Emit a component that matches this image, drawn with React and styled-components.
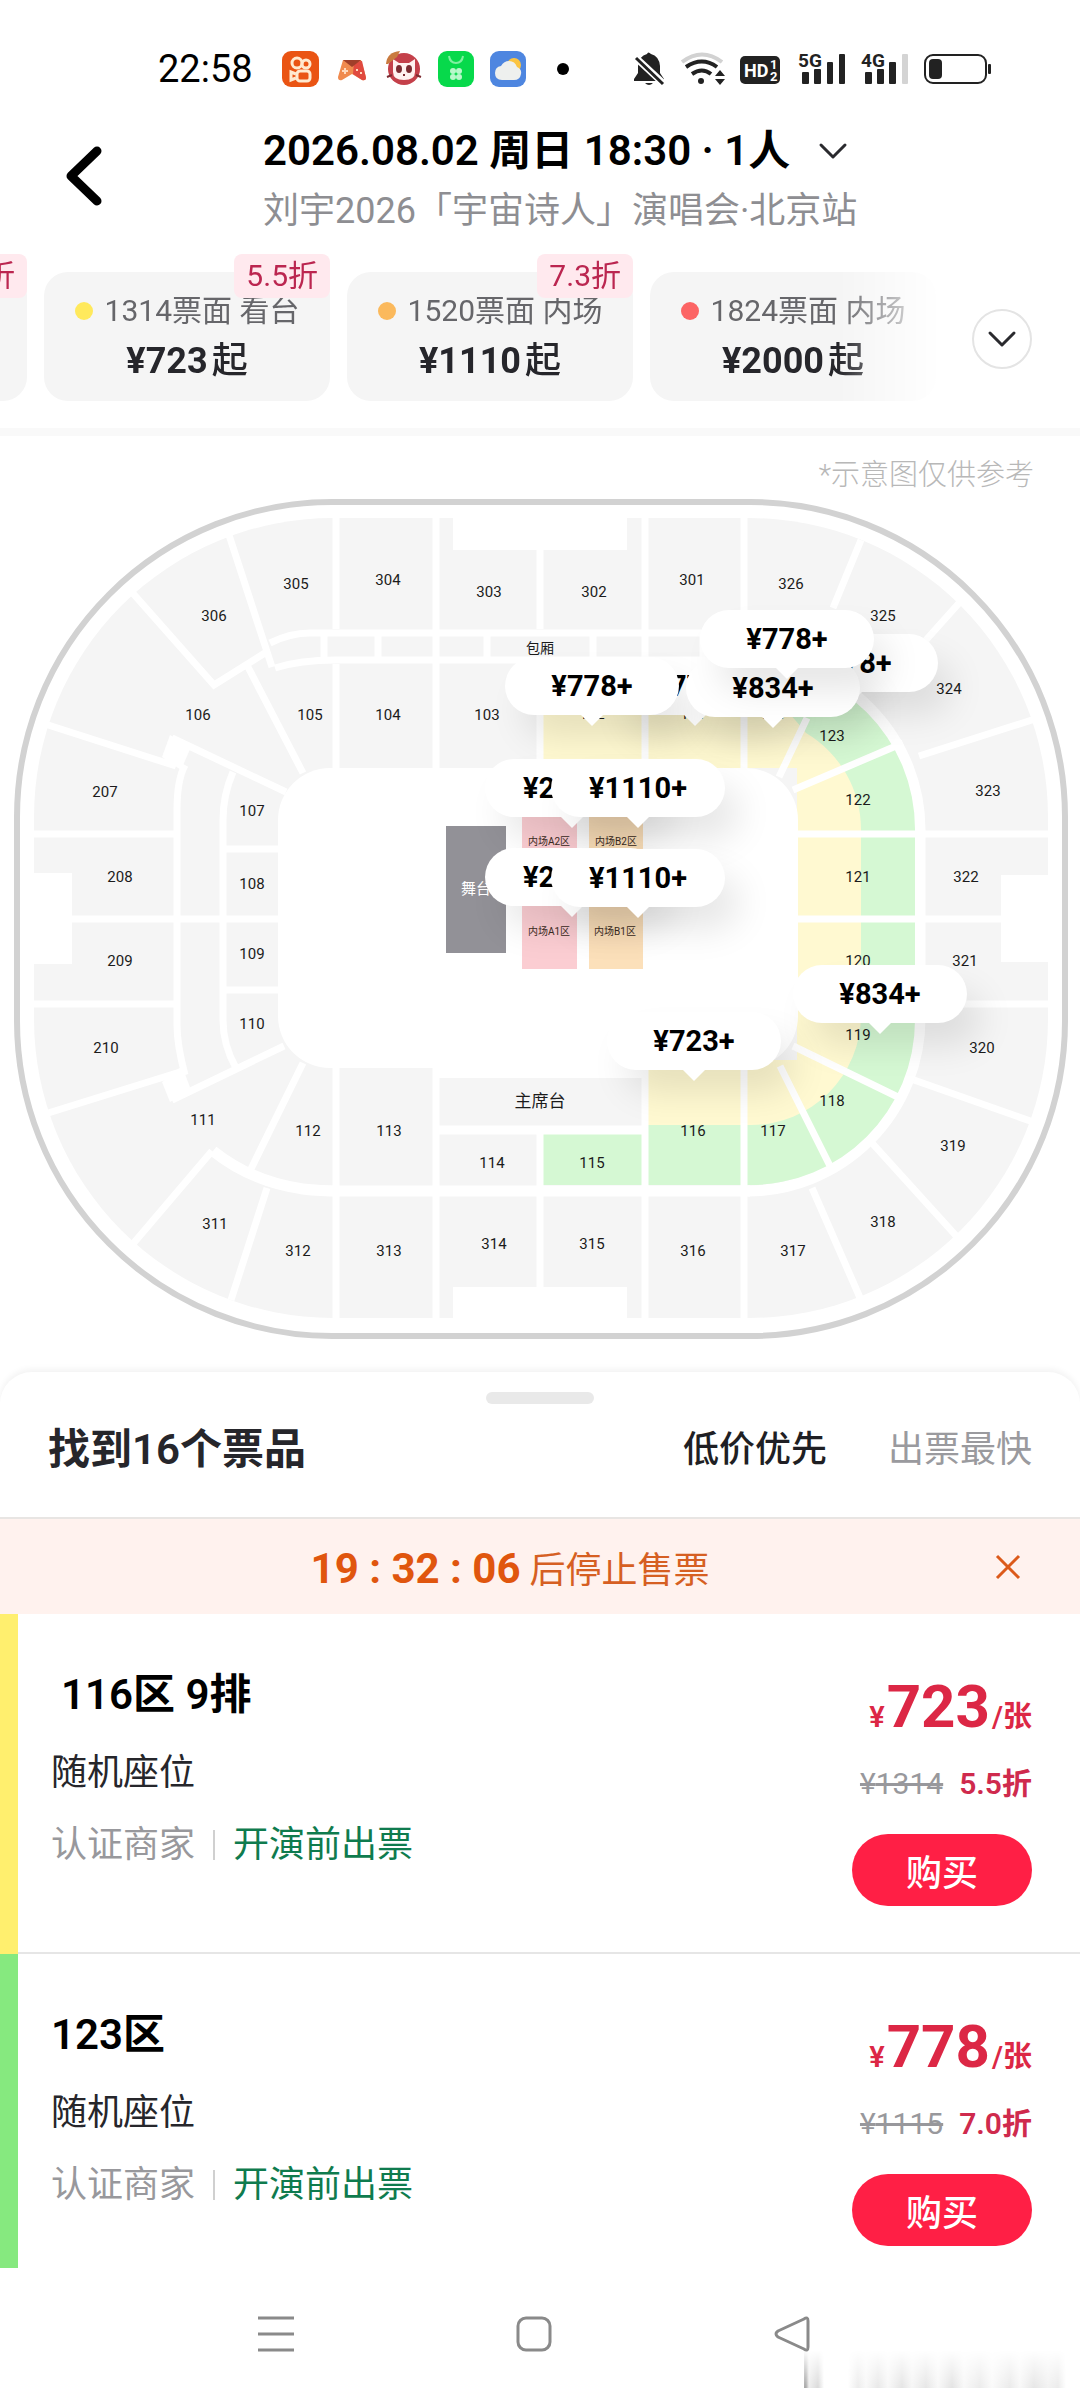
import React from "react";
import styled, { createGlobalStyle } from "styled-components";

const GlobalStyle = createGlobalStyle`
  * {
    box-sizing: border-box;
  }
  body {
    margin: 0;
    background: #fff;
    font-family: Roboto, "Noto Sans CJK SC", sans-serif;
  }
  button {
    border: 0;
    padding: 0;
    background: none;
    font: inherit;
    color: inherit;
    cursor: pointer;
  }
  svg {
    display: block;
    overflow: visible;
  }
  h1, h2, h3, p {
    margin: 0;
  }
`;

const tickets = [
  { label: "1115票面 看台", price: 778, off: "7.0折", color: "#84e77d" },
  { label: "1314票面 看台", price: 723, off: "5.5折", color: "#ffe95c" },
  { label: "1520票面 内场", price: 1110, off: "7.3折", color: "#fbb95c" },
  { label: "1824票面 内场", price: 2000, color: "#fc6464" },
];

const listings = [
  { id: 1, title: "116区 9排", inset: true, price: 723, face: 1314, off: "5.5折", color: "#ffef6e" },
  { id: 2, title: "123区", price: 778, face: 1115, off: "7.0折", color: "#86e97f" },
];

const labels = [
  [305, 296, 584], [304, 388, 580], [303, 489, 592], [302, 594, 592], [301, 692, 580],
  [326, 791, 584], [325, 883, 616], [324, 949, 689], [323, 988, 791], [322, 966, 877],
  [321, 965, 961], [320, 982, 1048], [319, 953, 1146], [318, 883, 1222], [317, 793, 1251],
  [316, 693, 1251], [315, 592, 1244], [314, 494, 1244], [313, 389, 1251], [312, 298, 1251],
  [311, 215, 1224], [306, 214, 616], [106, 198, 715], [105, 310, 715], [104, 388, 715],
  [103, 487, 715], [102, 592, 714], [101, 693, 714], [124, 772, 714], [207, 105, 792],
  [107, 252, 811], [208, 120, 877], [108, 252, 884], [209, 120, 961], [109, 252, 954],
  [210, 106, 1048], [110, 252, 1024], [111, 203, 1120], [112, 308, 1131], [113, 389, 1131],
  [114, 492, 1163], [115, 592, 1163], [116, 693, 1131], [117, 773, 1131], [118, 832, 1101],
  [119, 858, 1035], [120, 858, 961], [121, 858, 877], [122, 858, 800], [123, 832, 736],
];

// x is the tip of the pin, y the top of the bubble, both in map units
const pins = [
  { x: 695, y: 657, price: 778 },
  { x: 592, y: 657, price: 778 },
  { x: 851, y: 634, price: 778 },
  { x: 773, y: 659, price: 834 },
  { x: 787, y: 610, price: 778 },
  { x: 572, y: 759, price: 2000 },
  { x: 638, y: 759, price: 1110 },
  { x: 572, y: 848, price: 2000 },
  { x: 638, y: 849, price: 1110 },
  { x: 694, y: 1012, price: 723 },
  { x: 880, y: 965, price: 834 },
];

const MAP = { top: 496, width: 1080, height: 848 };

const Chevron = () => (
  <svg width="26" height="13" viewBox="0 0 26 13" fill="none" stroke="#2a2a2e" strokeWidth="3" strokeLinecap="round" strokeLinejoin="round">
    <path d="M1 0 L13 12 L25 0" />
  </svg>
);

const AppIcons = () => (
  <svg width="246" height="36" viewBox="282 51 246 36">
    <rect x="282" y="51" width="37" height="36" rx="9" fill="#ea5413" />
    <g fill="none" stroke="#ffe9cf" strokeWidth="3">
      <circle cx="297" cy="63" r="5" />
      <circle cx="306" cy="64" r="4" />
      <rect x="297" y="71" width="13" height="10" rx="3" />
      <path d="M296 74 l-5 -2 v8 l5 -2" />
    </g>
    <path d="M343 60 h18 l5 17 q0 4 -4 3 l-10 -6 -10 6 q-4 1 -4 -3z" fill="#f08a4e" />
    <path d="M354 62 l8 -1 4 17 q0 3 -4 2 l-9 -6z" fill="#e04a3f" />
    <path d="M343 60 h18 l-9 7z" fill="#a03f2a" />
    <path d="M342 71 h6 M345 68 v6 M356 70 h2 M360 73 h2" stroke="#ffd9bd" strokeWidth="2" />
    <circle cx="404" cy="69" r="16" fill="#c4404a" />
    <path d="M393 59 l6 4 h10 l6 -4 v13 q0 8 -11 8 q-11 0 -11 -8z" fill="#fff1ef" />
    <ellipse cx="399" cy="69" rx="3" ry="4" fill="#7c2b31" />
    <ellipse cx="409" cy="69" rx="3" ry="4" fill="#7c2b31" />
    <path d="M403 75 h2 M392 75 l-5 2 M416 75 l5 2" stroke="#7c2b31" strokeWidth="2" />
    <path d="M386 64 q1 -12 14 -13 q-2 4 -3 6 l-9 7z" fill="#c97a3f" />
    <rect x="438" y="51" width="36" height="36" rx="9" fill="#07d94b" />
    <path d="M449 56 q1 7 7 7 q6 0 7 -7" fill="none" stroke="#7ff0a0" strokeWidth="2" />
    <g fill="#b9f8cb">
      <circle cx="453" cy="71" r="3" />
      <circle cx="459" cy="71" r="3" />
      <circle cx="453" cy="77" r="3" />
      <circle cx="459" cy="77" r="3" />
    </g>
    <rect x="490" y="51" width="36" height="36" rx="9" fill="#4e86e0" />
    <circle cx="514" cy="65" r="7" fill="#fbc441" />
    <path d="M502 80 q-7 0 -7 -7 q0 -6 6 -7 q3 -5 8 -5 q6 0 8 6 q5 2 4 7 q-1 6 -7 6z" fill="#eef0ee" />
  </svg>
);

const SystemIcons = () => (
  <svg width="362" height="36" viewBox="630 51 362 36">
    <g fill="#222">
      <path d="M647 54 q1 -3 4 0 q8 2 9 12 v7 l4 6 v2 h-30 v-2 l4 -6 v-7 q1 -10 9 -12z" />
      <path d="M645 83 h8 q-4 4 -8 0z" />
    </g>
    <path d="M635 57 l29 27" stroke="#fff" strokeWidth="7" />
    <path d="M636 58 l27 26" stroke="#222" strokeWidth="3" />
    <g fill="none" strokeWidth="4">
      <path d="M682 62 q20 -15 40 0" stroke="#d2d2d2" />
      <path d="M686 67 q16 -11 31 0" stroke="#222" />
      <path d="M692 74 q10 -7 19 0" stroke="#222" />
    </g>
    <circle cx="701" cy="81" r="3" fill="#222" />
    <path d="M715 76 l5 -6 5 6z M715 79 l5 6 5 -6z" fill="#222" />
    <rect x="740" y="56" width="40" height="28" rx="5" fill="#222" />
    <g fill="#fff" fontWeight="700">
      <text x="744" y="77" fontSize="18">HD</text>
      <text x="770" y="69" fontSize="13">1</text>
      <text x="770" y="81" fontSize="13">2</text>
    </g>
    <g fill="#222">
      <text x="798" y="67" fontSize="19" fontWeight="700">5G</text>
      <rect x="802" y="72" width="7" height="12" rx="1" />
      <rect x="814" y="69" width="7" height="15" rx="1" />
      <rect x="827" y="62" width="6" height="22" rx="1" />
      <rect x="839" y="54" width="6" height="30" rx="1" />
      <text x="861" y="67" fontSize="19" fontWeight="700">4G</text>
      <rect x="865" y="72" width="7" height="12" rx="1" />
      <rect x="877" y="69" width="7" height="15" rx="1" />
      <rect x="889" y="62" width="7" height="22" rx="1" />
    </g>
    <rect x="902" y="54" width="6" height="30" rx="1" fill="#d4d4d4" />
    <rect x="925" y="55" width="61" height="28" rx="8" fill="none" stroke="#222" strokeWidth="2" />
    <rect x="929" y="59" width="13" height="20" rx="4" fill="#222" />
    <rect x="988" y="64" width="3" height="10" rx="1" fill="#222" />
  </svg>
);

const SeatMap = () => (
  <MapSvg viewBox={`0 ${MAP.top} ${MAP.width} ${MAP.height}`}>
    <rect x="17" y="502" width="1048" height="834" rx="315" fill="#fff" stroke="#d2d2d2" strokeWidth="6" />
    <rect x="34" y="518" width="1014" height="800" rx="299" fill="#f5f5f5" />

    {/* ring between outer and inner stands */}
    <path d="M748 657 A173 173 0 0 1 920 830 V1018 A173 173 0 0 1 748 1191" fill="none" stroke="#fff" strokeWidth="11" />
    <path d="M213 1151 Q252 1182 303 1189 Q320 1191 340 1191 H750" fill="none" stroke="#fff" strokeWidth="11" />

    {/* green and yellow stands */}
    <path d="M648 664 H750 A165 165 0 0 1 915 829 V1020 A165 165 0 0 1 750 1185 H648 V1060 H797 V768 H648z" fill="#d5f8d3" />
    <path d="M543 664 H648 V768 H543z" fill="#fff9d1" />
    <path d="M648 664 H740 Q790 712 806 733 A112 112 0 0 1 861 830 V1015 A110 110 0 0 1 751 1125 H648 V1060 H797 V768 H648z" fill="#fff9d1" />
    <rect x="543" y="1134" width="99" height="51" fill="#d5f8d3" />

    {/* field */}
    <rect x="278" y="768" width="520" height="300" rx="52" fill="#fff" />
    <rect x="439" y="1060" width="203" height="18" fill="#fff" />

    {/* notches */}
    <g fill="#fff">
      <rect x="453" y="510" width="174" height="40" />
      <rect x="453" y="1287" width="174" height="40" />
      <rect x="28" y="873" width="44" height="91" />
      <rect x="1001" y="875" width="54" height="87" />
      <path d="M170 735 L191 747 L181 770 L162 757z" />
      <path d="M162 1082 L170 1102 L191 1090 L182 1066z" />
    </g>

    {/* aisles */}
    <g fill="none" stroke="#fff" strokeWidth="7">
      <path d="M336 510 V629 M336 664 V768 M436 510 V768 M645 510 V768 M744 510 V768 M540 550 V629 M540 664 V768" />
      <path d="M336 1066 V1325 M436 1066 V1325 M645 1066 V1325 M744 1066 V1325 M540 1130 V1287" />
      <path d="M270 643 Q290 633 310 633 H748 M275 668 Q300 660 336 660 H748" />
      <path d="M324 633 V660 M378 633 V660 M487 633 V660 M593 633 V660 M703 633 V660" />
      <path d="M439 1130 H642" strokeWidth="9" />
      <path d="M28 834 H176 M28 919 H280 M28 1004 H176 M223 849 H280 M223 990 H280" />
      <path d="M185 765 Q177 780 177 810 V1025 Q177 1045 185 1075" />
      <path d="M233 772 Q223 795 223 820 V1020 Q223 1045 236 1068" />
      <path d="M797 834 H1055 M797 919 H1055 M921 1004 H1055" />
      <path d="M229 535 L272 667 M130 590 L214 685 L268 651 M248 667 L303 773 M45 724 L176 766 M172 738 L286 792" />
      <path d="M303 1063 L249 1173 M267 1188 L231 1300 M212 1151 L132 1245 M45 1114 L180 1072 M172 1100 L284 1046" />
      <path d="M793 790 L903 743 M779 777 L807 718 M919 756 L1035 719 M926 640 L960 602 M833 608 L861 540" />
      <path d="M793 1046 L902 1099 M780 1066 L832 1170 M812 1188 L861 1300 M872 1143 L959 1239 M914 1080 L1036 1123" />
    </g>

    <rect x="446" y="826" width="60" height="127" fill="#929197" />
    <rect x="522" y="780" width="55" height="69" fill="#fbcdd2" />
    <rect x="522" y="893" width="55" height="76" fill="#fbcdd2" />
    <rect x="589" y="780" width="54" height="69" fill="#fce0ba" />
    <rect x="589" y="893" width="54" height="76" fill="#fce0ba" />

    <g textAnchor="middle" fill="#1b1b1b" fontSize="15">
      {labels.map(([name, x, y]) => (
        <text key={name} x={x} y={y + 5}>{name}</text>
      ))}
      <text x="540" y="653" fontSize="14">包厢</text>
      <text x="540" y="1107" fontSize="17">主席台</text>
      <text x="476" y="894" fontSize="15" fill="#fff">舞台</text>
    </g>
    <g textAnchor="middle" fill="#3b2b22" fontSize="10">
      <text x="549" y="845">内场A2区</text>
      <text x="616" y="845">内场B2区</text>
      <text x="549" y="935">内场A1区</text>
      <text x="615" y="935">内场B1区</text>
    </g>
  </MapSvg>
);

export default function App() {
  return (
    <Screen>
      <GlobalStyle />
      <StatusBar>
        <Clock>22:58</Clock>
        <AppIcons />
        <Dot $color="#000" $size={12} />
        <Spacer />
        <SystemIcons />
      </StatusBar>

      <Header>
        <BackButton aria-label="返回">
          <svg width="36" height="60" viewBox="0 0 36 60" fill="none" stroke="#000" strokeWidth="9" strokeLinecap="round" strokeLinejoin="round">
            <path d="M31 5 L5 30 L31 55" />
          </svg>
        </BackButton>
        <div>
          <SessionButton>
            <Session>2026.08.02 周日 18:30 · 1人</Session>
            <Chevron />
          </SessionButton>
          <ShowName>刘宇2026「宇宙诗人」演唱会·北京站</ShowName>
        </div>
      </Header>

      <Filter>
        <FilterScroll>
          <FilterTrack>
            {tickets.map(item => (
              <PriceCard key={item.label}>
                {item.off && <Badge>{item.off}</Badge>}
                <FaceValue>
                  <Dot $color={item.color} $size={18} />
                  {item.label}
                </FaceValue>
                <FromPrice>
                  ¥{item.price}
                  <span>起</span>
                </FromPrice>
              </PriceCard>
            ))}
          </FilterTrack>
        </FilterScroll>
        <RoundButton aria-label="展开">
          <Chevron />
        </RoundButton>
      </Filter>

      <MapArea>
        <Note>*示意图仅供参考</Note>
        <MapCanvas>
          <SeatMap />
          {pins.map((pin, i) => (
            <Pin
              key={i}
              style={{
                left: `${(pin.x / MAP.width) * 100}%`,
                top: `${((pin.y - MAP.top) / MAP.height) * 100}%`,
              }}
            >
              ¥{pin.price}+
            </Pin>
          ))}
        </MapCanvas>
      </MapArea>

      <Sheet>
        <Handle />
        <SheetHead>
          <SheetTitle>找到16个票品</SheetTitle>
          <SortButton $active>低价优先</SortButton>
          <SortButton>出票最快</SortButton>
        </SheetHead>
        <Notice>
          <NoticeText>
            <strong>19 : 32 : 06</strong> 后停止售票
          </NoticeText>
          <CloseButton aria-label="关闭">
            <svg width="24" height="24" viewBox="0 0 24 24" stroke="#dc5a1a" strokeWidth="3">
              <path d="M1 1 L23 23 M23 1 L1 23" />
            </svg>
          </CloseButton>
        </Notice>
        <List>
          {listings.map(item => (
            <Row key={item.id} $color={item.color}>
              <Info>
                <RowTitle $inset={item.inset}>{item.title}</RowTitle>
                <Seat>随机座位</Seat>
                <Seller>
                  认证商家
                  <Bar />
                  <em>开演前出票</em>
                </Seller>
              </Info>
              <Side>
                <Price>
                  ¥<b>{item.price}</b>/张
                </Price>
                <Discount>
                  <del>¥{item.face}</del>
                  <strong>{item.off}</strong>
                </Discount>
                <BuyButton>购买</BuyButton>
              </Side>
            </Row>
          ))}
        </List>
      </Sheet>

      <NavBar>
        <button aria-label="最近任务">
          <svg width="36" height="36" stroke="#8a8a8a" strokeWidth="3">
            <path d="M0 2 H36 M0 18 H36 M0 34 H36" />
          </svg>
        </button>
        <button aria-label="主页">
          <svg width="36" height="36" fill="none" stroke="#8a8a8a" strokeWidth="3">
            <rect x="2" y="2" width="32" height="32" rx="8" />
          </svg>
        </button>
        <button aria-label="后退">
          <svg width="36" height="36" fill="none" stroke="#8a8a8a" strokeWidth="3" strokeLinejoin="round">
            <path d="M34 5 V31 Q34 36 30 33 L4 21 Q0 18 4 15 L30 3 Q34 0 34 5z" />
          </svg>
        </button>
        <Streaks />
      </NavBar>
    </Screen>
  );
}

const Screen = styled.div`
  display: flex;
  flex-direction: column;
  height: 100vh;
  overflow: hidden;
  background: #fff;
`;

const StatusBar = styled.div`
  display: flex;
  align-items: center;
  height: 96px;
  padding: 42px 88px 0 158px;
  flex-shrink: 0;
  gap: 29px;
`;

const Clock = styled.span`
  font-size: 38px;
  line-height: 48px;
`;

const Spacer = styled.span`
  flex: 1;
`;

const Dot = styled.span`
  flex-shrink: 0;
  width: ${props => props.$size}px;
  height: ${props => props.$size}px;
  border-radius: 50%;
  background: ${props => props.$color};
`;

const Header = styled.header`
  display: flex;
  align-items: flex-start;
  padding-top: 27px;
  flex-shrink: 0;
`;

const BackButton = styled.button`
  display: flex;
  align-items: center;
  width: 263px;
  height: 106px;
  padding-left: 66px;
`;

const SessionButton = styled.button`
  display: flex;
  align-items: center;
  gap: 30px;
  height: 56px;
`;

const Session = styled.h1`
  font-size: 42px;
  line-height: 56px;
  font-weight: 600;
  color: #000;
`;

const ShowName = styled.p`
  margin-top: 3px;
  font-size: 36px;
  line-height: 58px;
  font-weight: 400;
  color: #8e8e92;
`;

const Filter = styled.section`
  display: flex;
  align-items: center;
  justify-content: space-between;
  padding-right: 48px;
  border-bottom: 8px solid #f9f9f9;
  flex-shrink: 0;
`;

const FilterScroll = styled.div`
  flex: 1;
  margin-right: 24px;
  padding: 32px 0 27px;
  overflow: hidden;
  mask-image: linear-gradient(to right, #000 calc(100% - 110px), transparent calc(100% - 6px));
`;

const FilterTrack = styled.div`
  display: flex;
  gap: 17px;
  margin-left: -259px;
`;

const PriceCard = styled.button`
  position: relative;
  flex: 0 0 286px;
  display: flex;
  flex-direction: column;
  align-items: center;
  gap: 6px;
  padding: 20px 0 15px;
  border-radius: 24px;
  background: #f5f5f5;
`;

const Badge = styled.span`
  position: absolute;
  top: -18px;
  right: 0;
  padding: 0 12px;
  border-radius: 8px;
  background: #ffe9ee;
  color: #bb2650;
  font-size: 30px;
  line-height: 44px;
`;

const FaceValue = styled.span`
  display: flex;
  align-items: center;
  gap: 12px;
  font-size: 30px;
  line-height: 38px;
  color: #66666a;
  white-space: nowrap;
`;

const FromPrice = styled.span`
  font-size: 36px;
  line-height: 50px;
  font-weight: 700;
  color: #26262b;

  span {
    margin-left: 4px;
    font-weight: 500;
  }
`;

const RoundButton = styled.button`
  display: flex;
  align-items: center;
  justify-content: center;
  width: 60px;
  height: 60px;
  margin-top: 10px;
  border: 2px solid #e4e4e4;
  border-radius: 50%;
`;

const MapArea = styled.section`
  flex-shrink: 0;
  padding-bottom: 28px;
`;

const Note = styled.p`
  height: 60px;
  padding: 18px 46px 0 0;
  text-align: right;
  font-size: 29px;
  line-height: 42px;
  font-weight: 300;
  color: #b8b8b8;
`;

const MapCanvas = styled.div`
  position: relative;
`;

const MapSvg = styled.svg`
  width: 100%;
  height: auto;
`;

const Pin = styled.button`
  position: absolute;
  width: 174px;
  height: 58px;
  margin-left: -87px;
  border-radius: 29px;
  background: #fff;
  box-shadow: 16px 24px 36px -2px rgba(0, 0, 0, 0.1);
  font-size: 29px;
  line-height: 56px;
  font-weight: 700;
  color: #000;

  &::after {
    content: "";
    position: absolute;
    top: 57px;
    left: 75px;
    border: 12px solid transparent;
    border-top-color: #fff;
    border-bottom: 0;
  }
`;

const Sheet = styled.section`
  display: flex;
  flex-direction: column;
  flex: 1;
  min-height: 0;
  border-radius: 32px 32px 0 0;
  background: #fff;
  box-shadow: 0 -3px 6px rgba(0, 0, 0, 0.05);
`;

const Handle = styled.div`
  align-self: center;
  flex-shrink: 0;
  width: 108px;
  height: 12px;
  margin-top: 20px;
  border-radius: 6px;
  background: #e9e9e9;
`;

const SheetHead = styled.div`
  display: flex;
  align-items: center;
  gap: 61px;
  padding: 13px 48px 34px;
  border-bottom: 2px solid #e8e5e3;
`;

const SheetTitle = styled.h2`
  flex: 1;
  font-size: 42px;
  line-height: 66px;
  font-weight: 600;
  color: #26262b;
`;

const SortButton = styled.button`
  font-size: 36px;
  line-height: 60px;
  font-weight: ${props => (props.$active ? 500 : 400)};
  color: ${props => (props.$active ? "#1f1f24" : "#9a9a9e")};
`;

const Notice = styled.div`
  display: flex;
  align-items: center;
  padding-right: 60px;
  background: #fff2ee;
`;

const NoticeText = styled.p`
  flex: 1;
  padding: 20px 0 13px 24px;
  text-align: center;
  font-size: 36px;
  line-height: 60px;
  color: #d65f22;

  strong {
    font-size: 42px;
    font-weight: 700;
    color: #e0560e;
  }
`;

const CloseButton = styled.button`
  flex-shrink: 0;
`;

const List = styled.div`
  flex: 1;
  min-height: 0;
  overflow: auto;
  scrollbar-width: none;
`;

const Row = styled.article`
  display: flex;
  justify-content: space-between;
  padding: 51px 48px 48px 33px;
  border-left: 18px solid ${props => props.$color};
  box-shadow: inset 0 -2px 0 #e6e6e6;
`;

const Info = styled.div`
  display: flex;
  flex-direction: column;
`;

const RowTitle = styled.h3`
  padding-left: ${props => (props.$inset ? 10 : 0)}px;
  font-size: 42px;
  line-height: 60px;
  font-weight: 600;
  color: #000;
`;

const Seat = styled.p`
  margin-top: 12px;
  font-size: 36px;
  line-height: 72px;
  color: #26262b;
`;

const Seller = styled.p`
  display: flex;
  align-items: center;
  font-size: 36px;
  line-height: 72px;
  color: #98989c;

  em {
    font-style: normal;
    color: #0f7b4e;
  }
`;

const Bar = styled.span`
  width: 2px;
  height: 30px;
  margin: 0 18px;
  background: #d0d0d0;
`;

const Side = styled.div`
  display: flex;
  flex-direction: column;
  align-items: flex-end;
`;

const Price = styled.p`
  padding-top: 10px;
  font-size: 29px;
  line-height: 84px;
  font-weight: 600;
  color: #dc2745;

  b {
    margin: 0 2px;
    font-size: 60px;
    line-height: 58px;
    font-weight: 700;
  }
`;

const Discount = styled.p`
  display: flex;
  gap: 16px;
  margin-top: 2px;
  font-size: 30px;
  line-height: 46px;

  del {
    color: #98989c;
  }
  strong {
    font-weight: 600;
    color: #cf2a4d;
  }
`;

const BuyButton = styled.button`
  width: 180px;
  height: 72px;
  margin-top: 27px;
  border-radius: 36px;
  background: #ff1f45;
  color: #fff;
  font-size: 36px;
  font-weight: 500;
`;

const NavBar = styled.nav`
  position: relative;
  display: flex;
  align-items: center;
  justify-content: center;
  gap: 222px;
  height: 132px;
  padding-right: 12px;
  flex-shrink: 0;
  background: #fff;
`;

const Streaks = styled.div`
  position: absolute;
  right: 14px;
  bottom: 12px;
  width: 262px;
  height: 38px;
  background: linear-gradient(
    to right,
    #aaa 0 2px, #eee 5px, #dadada 14px, #fff 20px 44px, #ececec 54px, #f8f8f8 62px,
    #e8e8e8 74px, #f8f8f8 84px, #e4e4e4 98px, #f6f6f6 108px, #e6e6e6 122px, #f8f8f8 134px,
    #e3e3e3 148px, #f8f8f8 160px, #ebebeb 176px, #fafafa 188px, #eaeaea 206px, #f8f8f8 216px,
    #e6e6e6 230px, #f2f2f2 244px, #ebebeb 254px, #fff 262px
  );
  mask-image: linear-gradient(to bottom, transparent, #000);
`;
